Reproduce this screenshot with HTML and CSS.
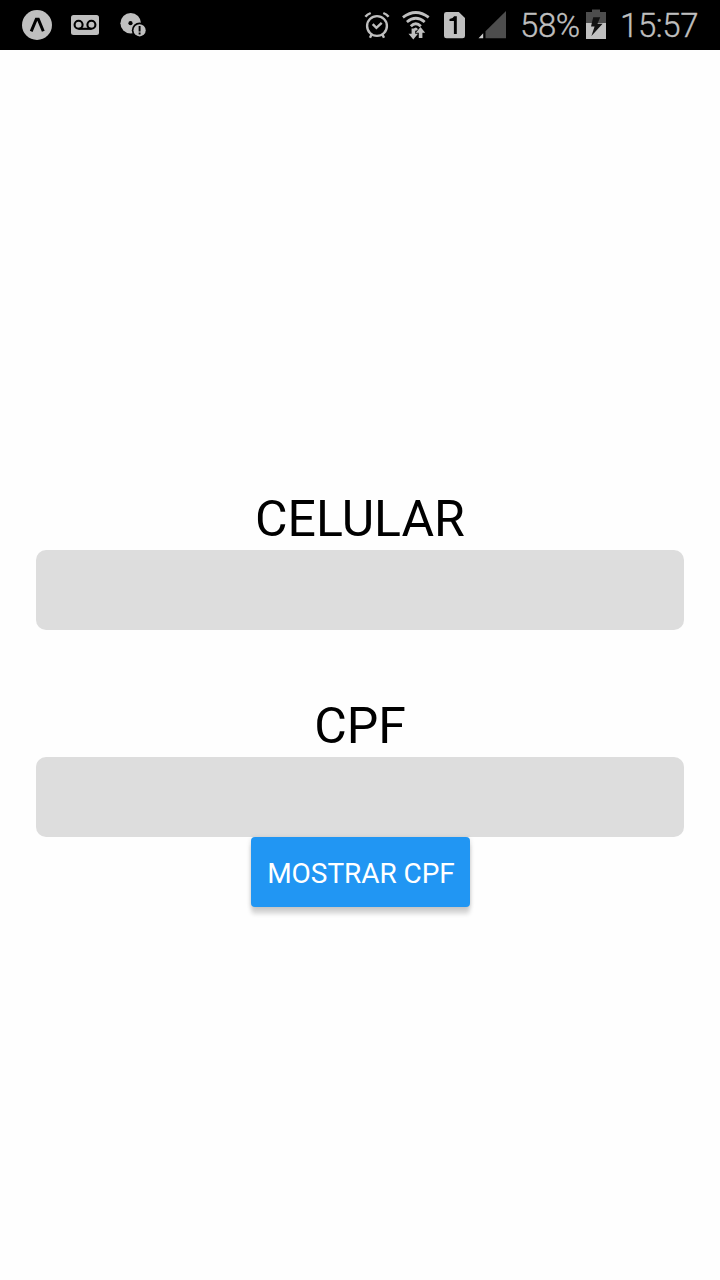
FILE: index.html
```html
<!DOCTYPE html>
<html lang="pt-BR">
<head>
<meta charset="utf-8">
<title>CPF</title>
<link rel="stylesheet" href="styles.css">
</head>
<body>
<header class="status">
  <div class="notifications">
    <svg class="icon" width="30" height="50" viewBox="22 0 30 50"><circle cx="37" cy="25" r="15" fill="#bfbfbf"/><path d="M31.2 31.3L36.3 19.2H38.3L43.3 31.3" fill="none" stroke="#000" stroke-width="3"/></svg>
    <svg class="icon" width="28" height="50" viewBox="71 0 28 50"><rect x="71" y="15" width="28" height="20" rx="2.5" fill="#bfbfbf"/><g fill="none" stroke="#000" stroke-width="2.1"><circle cx="78.6" cy="24.8" r="4"/><circle cx="91.4" cy="24.8" r="4"/><path d="M78.6 28.8H91.4"/></g></svg>
    <svg class="icon" width="26" height="50" viewBox="120 0 26 50"><circle cx="130.7" cy="23.3" r="10.3" fill="#bfbfbf"/><circle cx="130.5" cy="23.2" r="2.1"/><circle cx="139.6" cy="30.3" r="7.8"/><circle cx="139.6" cy="30.3" r="6.1" fill="#bfbfbf"/><path d="M139.6 26V31.4M139.6 32.6V34.6" stroke="#000" stroke-width="1.9"/></svg>
  </div>
  <div class="system">
    <svg class="icon alarm" width="26" height="50" viewBox="364 0 26 50"><g fill="none" stroke="#bfbfbf" stroke-width="2.4"><circle cx="377" cy="26" r="9.9"/><path d="M372.7 24.2L376.4 27.9L381.7 22.8"/><path d="M365.4 16.7Q367.2 14.4 370.7 13M388.6 16.7Q386.8 14.4 383.3 13" stroke-width="2.4"/><path d="M371.8 34L370 37.8M382.2 34L384 37.8"/></g></svg>
    <svg class="icon wifi" width="28" height="50" viewBox="402 0 28 50"><g fill="none" stroke="#bfbfbf" stroke-width="2.8"><path d="M402.9 17.3Q415.8 7.6 428.7 17.3"/><path d="M406.9 22Q415.8 14.6 424.7 22"/><path d="M410.8 26.3Q415.8 21.2 420.8 26.3"/></g><path d="M413.5 29.2Q415.8 25.8 418 29.2L415.8 31z" fill="#bfbfbf"/><path d="M411.6 28.5H415.2V33.8H418L413.3 39.5L408.5 33.8H411.6zM418.8 38V32.8H415.8L420.5 27L425.2 32.8H422.4V38z" fill="#bfbfbf"/></svg>
    <svg class="icon sim" width="21" height="50" viewBox="444 0 21 50"><path d="M446.5 12H458.8L465 18V36Q465 38.3 462.5 38.3H446.5Q444 38.3 444 36V14.3Q444 12 446.5 12z" fill="#bfbfbf"/><path d="M453.9 33.9V21H449.5V19Q453.2 18.6 454.2 16.3H456.8V33.9z"/></svg>
    <svg class="icon signal" width="28" height="50" viewBox="478 0 28 50"><path d="M506 11V38.3H485.5V31.3z" fill="#4d4d4d"/><path d="M478.5 38.3L483.2 33.3V38.3z" fill="#cfcfcf"/></svg>
    <span class="percent">58%</span>
    <svg class="icon battery" width="20" height="50" viewBox="586 0 20 50"><path d="M586 23V12H592V9.5H600V12H606V23z" fill="#4d4d4d"/><path d="M586 23H606V39H586z" fill="#bfbfbf"/><path d="M593.2 17.2H600.2L597.5 23.8H602.6L591.4 36L594.6 26.4H591z" fill="#111"/></svg>
    <span class="clock">15:57</span>
  </div>
</header>
<main class="form">
  <label class="label" for="celular">CELULAR</label>
  <input class="field" id="celular" type="tel">
  <label class="label label-cpf" for="cpf">CPF</label>
  <input class="field" id="cpf" type="text">
  <button class="button" type="button">MOSTRAR CPF</button>
</main>
</body>
</html>
```

FILE: styles.css
```css
* { box-sizing: border-box; }
body {
  margin: 0;
  height: 1280px;
  display: flex;
  flex-direction: column;
  background: #fefefe;
  font-family: Roboto, sans-serif;
  color: #000;
}
.status {
  display: flex;
  justify-content: space-between;
  height: 50px;
  padding: 0 22px;
  background: #000;
  color: #bfbfbf;
  font-size: 33px;
  font-weight: 300;
  letter-spacing: -0.4px;
  -webkit-text-stroke: 0.35px #bfbfbf;
  line-height: 52px;
}
.notifications { display: flex; gap: 19px; }
.notifications .icon:last-child { margin-left: 2px; }
.system { display: flex; }
.icon { display: block; flex: none; }
.alarm { margin-right: 12px; }
.wifi { margin-right: 14px; }
.sim { margin-right: 13px; }
.signal { margin-right: 14px; }
.percent { width: 66px; white-space: nowrap; }
.battery { margin-right: 14px; }
.clock { width: 78px; white-space: nowrap; }
.form {
  flex: 1;
  display: flex;
  flex-direction: column;
  align-items: center;
  padding: 438px 36px 0;
}
.label { font-size: 50px; line-height: 62px; }
.label-cpf { margin-top: 65px; }
.field {
  width: 100%;
  height: 80px;
  flex: none;
  padding: 0 16px;
  border: 0;
  border-radius: 10px;
  background: #ddd;
  font: inherit;
  font-size: 40px;
}
.button {
  width: 219px;
  height: 70px;
  flex: none;
  margin-left: 1px;
  padding: 3px 0 0 1px;
  border: 0;
  border-radius: 4px;
  background: #2196f3;
  box-shadow: 0 7px 4px rgba(0, 0, 0, .15), 0 1px 5px rgba(0, 0, 0, .14);
  color: #fff;
  font: 400 28px/34px Roboto, sans-serif;
  letter-spacing: -0.05px;
  white-space: nowrap;
}
```
